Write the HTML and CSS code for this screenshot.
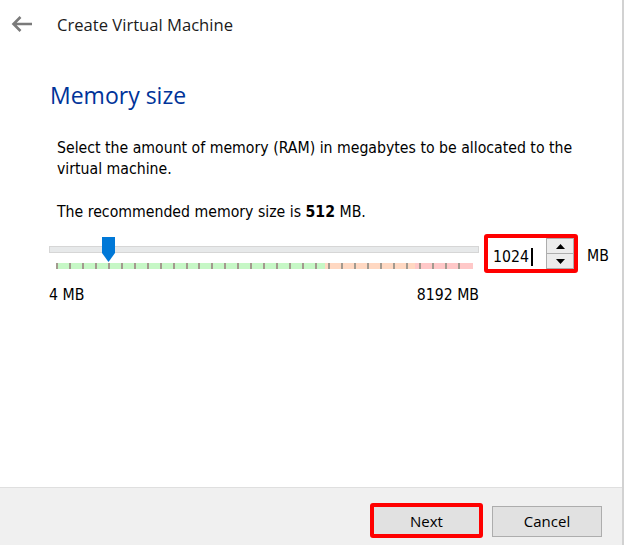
FILE: index.html
```html
<!DOCTYPE html>
<html lang="en">
<head>
<meta charset="utf-8">
<title>Create Virtual Machine</title>
<link rel="stylesheet" href="styles.css">
</head>
<body>
<div class="window">
  <header class="titlebar">
    <svg class="back" width="22" height="18" viewBox="0 0 22 18" aria-hidden="true">
      <path d="M21 9H2.5M9.5 2L2.5 9l7 7" stroke="#7a7a7a" stroke-width="2.6" fill="none" stroke-linecap="butt" stroke-linejoin="miter"/>
    </svg>
    <span class="title">Create Virtual Machine</span>
  </header>
  <main class="content">
    <h1 class="heading">Memory size</h1>
    <p class="desc">Select the amount of memory (RAM) in megabytes to be allocated to the virtual machine.</p>
    <p class="desc rec">The recommended memory size is <b>512</b> MB.</p>
    <div class="slider-row">
      <div class="slider">
        <div class="track"></div>
        <div class="thumb"></div>
        <div class="band">
          <div class="ticks">
            <i></i><i></i><i></i><i></i><i></i><i></i><i></i><i></i>
            <i></i><i></i><i></i><i></i><i></i><i></i><i></i><i></i>
            <i></i><i></i><i></i><i></i><i></i><i></i><i></i><i></i>
            <i></i><i></i><i></i><i></i><i></i><i></i><i></i><i></i>
          </div>
        </div>
        <div class="scale"><span>4 MB</span><span>8192 MB</span></div>
      </div>
      <div class="spin-hl">
        <div class="spin">
          <div class="value">1024<span class="caret"></span></div>
          <div class="spin-btns">
            <div class="sbtn"><svg width="9" height="5" viewBox="0 0 9 5"><path d="M0 5L4.5 0 9 5z" fill="#000"/></svg></div>
            <div class="sbtn"><svg width="9" height="5" viewBox="0 0 9 5"><path d="M0 0L4.5 5 9 0z" fill="#000"/></svg></div>
          </div>
        </div>
      </div>
      <span class="unit">MB</span>
    </div>
  </main>
  <footer class="buttons">
    <button class="btn next">Next</button>
    <button class="btn cancel">Cancel</button>
  </footer>
</div>
</body>
</html>
```
FILE: styles.css
```css
html, body {
  margin: 0;
  padding: 0;
  background: #ffffff;
}

.window {
  width: 624px;
  height: 545px;
  box-sizing: border-box;
  border-right: 2px solid #d2d2d2;
  display: flex;
  flex-direction: column;
  background: #ffffff;
  overflow: hidden;
}

.titlebar {
  height: 50px;
  display: flex;
  align-items: center;
  flex-shrink: 0;
}

.back {
  margin-left: 11px;
  margin-top: -2px;
}

.title {
  margin-left: 24px;
  margin-top: -1px;
  font-family: "Open Sans", "Noto Sans", sans-serif;
  font-size: 16.6px;
  color: #1b1b1b;
}

.content {
  flex: 1;
}

.heading {
  margin: 30px 0 0 50px;
  font-family: "Open Sans", "Noto Sans", sans-serif;
  font-weight: 400;
  font-size: 23px;
  line-height: 30px;
  color: #003399;
}

.desc {
  margin: 27px 0 0 57px;
  width: 535px;
  font-family: "DejaVu Sans Condensed", "DejaVu Sans", sans-serif;
  font-size: 15.7px;
  line-height: 21px;
  color: #000;
}

.desc.rec {
  margin-top: 22px;
}

.desc b {
  font-weight: 700;
}

.slider-row {
  margin: 12px 0 0 49px;
  display: flex;
  align-items: flex-start;
}

.slider {
  position: relative;
  width: 430px;
  padding-top: 12px;
}

.track {
  height: 7px;
  box-sizing: border-box;
  border: 1px solid #d6d6d6;
  background: #e7e9ea;
}

.thumb {
  position: absolute;
  left: 53px;
  top: 3px;
  width: 13px;
  height: 25px;
  background: #0078d7;
  clip-path: polygon(0 0, 100% 0, 100% 64%, 50% 100%, 0 64%);
}

.band {
  margin: 10px 0 0 7px;
  width: 417px;
  height: 6px;
  box-sizing: border-box;
  padding-right: 13px;
  background: linear-gradient(to right, #c6f7c6 0, #c6f7c6 269px, #ffd8c2 269px, #ffd8c2 359px, #ffc8c8 359px);
}

.ticks {
  height: 6px;
  display: flex;
  justify-content: space-between;
}

.ticks i {
  display: block;
  width: 2px;
  height: 6px;
  background: #a39a8f;
}

.scale {
  margin-top: 15px;
  display: flex;
  justify-content: space-between;
  font-family: "DejaVu Sans Condensed", "DejaVu Sans", sans-serif;
  font-size: 15.7px;
  line-height: 21px;
  color: #000;
}

.spin-hl {
  margin-left: 5px;
  width: 94px;
  height: 39px;
  box-sizing: border-box;
  border: 4px solid #ff0000;
  border-radius: 3px;
  background: #fff;
}

.spin {
  height: 100%;
  display: flex;
}

.value {
  flex: 1;
  display: flex;
  align-items: center;
  padding-left: 5px;
  padding-top: 6px;
  font-family: "DejaVu Sans Condensed", "DejaVu Sans", sans-serif;
  font-size: 15.7px;
  color: #000;
}

.caret {
  display: inline-block;
  width: 2px;
  height: 18px;
  margin-left: 2px;
  background: #000;
}

.spin-btns {
  width: 28px;
  display: flex;
  flex-direction: column;
}

.sbtn {
  flex: 1;
  display: flex;
  align-items: center;
  justify-content: center;
  box-sizing: border-box;
  border: 1px solid #adadad;
  background: #ececec;
}

.sbtn + .sbtn {
  border-top: none;
}

.unit {
  margin: 12px 0 0 9px;
  font-family: "DejaVu Sans Condensed", "DejaVu Sans", sans-serif;
  font-size: 15.7px;
  color: #000;
}

.buttons {
  height: 58px;
  flex-shrink: 0;
  box-sizing: border-box;
  border-top: 1px solid #dfdfdf;
  background: #f0f0f0;
  display: flex;
  justify-content: flex-end;
  align-items: flex-start;
  gap: 9px;
  padding: 15px 20px 0 0;
}

.btn {
  font-family: "Open Sans", "Noto Sans", sans-serif;
  font-size: 15px;
  color: #000;
  background: #e1e1e1;
  border: 1px solid #adadad;
  margin: 0;
  padding: 0;
  box-sizing: border-box;
}

.btn.next {
  width: 113px;
  height: 35px;
  border: 4px solid #ff0000;
  border-radius: 3px;
}

.btn.cancel {
  width: 110px;
  height: 31px;
  margin-top: 3px;
  padding-bottom: 1px;
}
```
